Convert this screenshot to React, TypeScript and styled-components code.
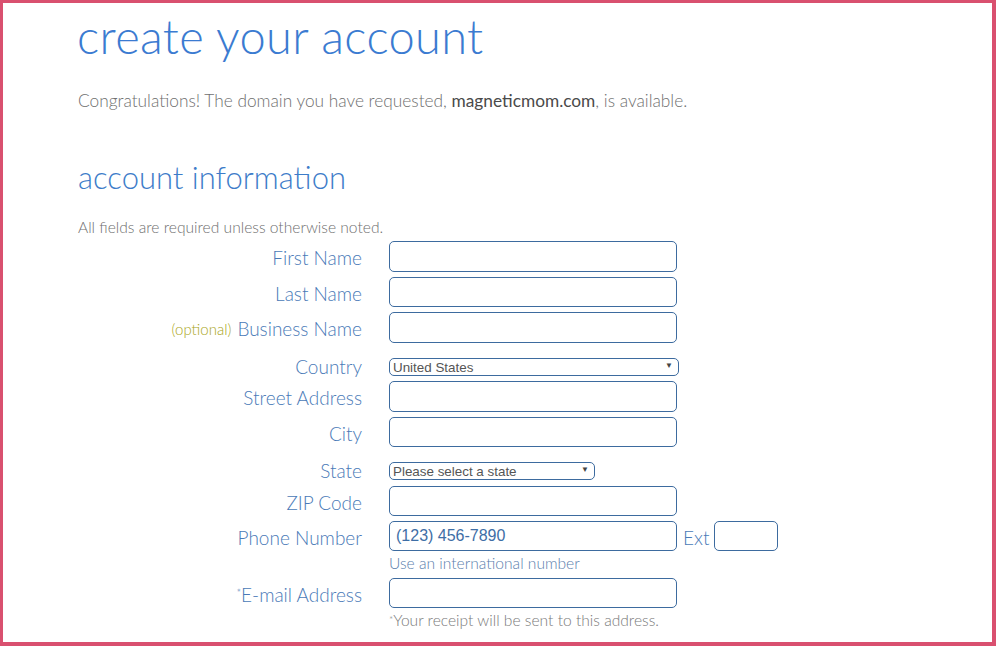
import React from "react";
import styled, { createGlobalStyle } from "styled-components";

const Global = createGlobalStyle`
  html, body { margin: 0; padding: 0; background: #fff; }
  * { box-sizing: border-box; }
`;

const Frame = styled.div`
  width: 996px;
  height: 646px;
  border: 3px solid #d9506f;
  border-right-width: 4px;
  border-bottom-width: 4px;
  overflow: hidden;
  padding: 0 0 0 75px;
  font-family: Lato, "Open Sans", sans-serif;
`;

const Title = styled.h1`
  margin: 5px 0 0 -1px;
  font-weight: 300;
  font-size: 47px;
  line-height: 56px;
  color: #3b7bd1;
  letter-spacing: 0.35px;
`;

const Intro = styled.p`
  margin: 25px 0 0;
  font-size: 17.3px;
  line-height: 24px;
  font-weight: 300;
  color: #6f6f6f;
`;

const Strong = styled.span`
  font-weight: 400;
  color: #4a4a4a;
`;

const Section = styled.h2`
  margin: 44px 0 0;
  font-weight: 300;
  font-size: 31px;
  line-height: 40px;
  color: #3d7cc9;
`;

const Note = styled.p`
  margin: 20px 0 0;
  font-size: 15.6px;
  line-height: 20px;
  font-weight: 300;
  color: #6f6f6f;
`;

const Form = styled.div`
  display: grid;
  grid-template-columns: 287px auto;
  column-gap: 27px;
  margin-top: 4px;
  margin-left: -3px;
`;

const Label = styled.label<{ $mt?: number; $h?: number }>`
  margin-top: ${(p) => p.$mt ?? 0}px;
  height: ${(p) => p.$h ?? 31}px;
  padding-top: 2px;
  display: flex;
  align-items: center;
  justify-content: flex-end;
  font-size: 19px;
  font-weight: 300;
  color: #4a7ab7;
  white-space: nowrap;
`;

const Optional = styled.span`
  color: #a9a520;
  font-size: 15px;
  margin-right: 6px;
`;

const Star = styled.span<{ $size?: number; $mt?: number }>`
  font-size: ${(p) => p.$size ?? 11}px;
  line-height: 1;
  align-self: flex-start;
  margin-top: ${(p) => p.$mt ?? 7}px;
`;

const Cell = styled.div<{ $mt?: number; $h?: number }>`
  margin-top: ${(p) => p.$mt ?? 0}px;
  height: ${(p) => p.$h ?? 31}px;
  display: flex;
  align-items: center;
`;

const Input = styled.input<{ $w?: number }>`
  width: ${(p) => p.$w ?? 288}px;
  height: 100%;
  border: 1.5px solid #3d6b9f;
  border-radius: 5px;
  background: #fff;
  padding: 0 6px;
  font-family: Arial, "Liberation Sans", sans-serif;
  font-size: 16px;
  color: #3e6ea6;
  outline: none;
  &::placeholder { color: #3e6ea6; opacity: 1; }
`;

const SelectBox = styled.div<{ $w: number }>`
  position: relative;
  width: ${(p) => p.$w}px;
  height: 18px;
  margin-top: -1px;
`;

const Select = styled.select`
  appearance: none;
  width: 100%;
  height: 100%;
  border: 1.5px solid #3d6b9f;
  border-radius: 5px;
  background: #fff;
  padding: 0 0 0 3px;
  font-family: Arial, "Liberation Sans", sans-serif;
  font-size: 13.4px;
  color: #555;
  outline: none;
`;

const Arrow = styled.span`
  position: absolute;
  right: 6px;
  top: 2px;
  font-size: 8px;
  color: #444;
  pointer-events: none;
  line-height: 14px;
`;

const Ext = styled.span`
  font-size: 19px;
  font-weight: 300;
  color: #4a7ab7;
  margin: 2px 5px 0 6px;
`;

const Help = styled.div<{ $color: string; $mt?: number }>`
  margin-top: ${(p) => p.$mt ?? 0}px;
  display: flex;
  font-size: 15.6px;
  font-weight: 300;
  line-height: 20px;
  color: ${(p) => p.$color};
`;

const Empty = styled.div``;

export default function App() {
  return (
    <>
      <Global />
      <Frame>
        <Title>create your account</Title>
        <Intro>
          Congratulations! The domain you have requested, <Strong>magneticmom.com</Strong>, is available.
        </Intro>
        <Section>account information</Section>
        <Note>All fields are required unless otherwise noted.</Note>
        <Form>
          <Label>First Name</Label>
          <Cell><Input /></Cell>

          <Label $mt={5} $h={30}>Last Name</Label>
          <Cell $mt={5} $h={30}><Input /></Cell>

          <Label $mt={5}><Optional>(optional)</Optional>Business Name</Label>
          <Cell $mt={5}><Input /></Cell>

          <Label $mt={6} $h={32}>Country</Label>
          <Cell $mt={6} $h={32}>
            <SelectBox $w={290}>
              <Select defaultValue="us">
                <option value="us">United States</option>
              </Select>
              <Arrow>▼</Arrow>
            </SelectBox>
          </Cell>

          <Label>Street Address</Label>
          <Cell><Input /></Cell>

          <Label $mt={5} $h={30}>City</Label>
          <Cell $mt={5} $h={30}><Input /></Cell>

          <Label $mt={5} $h={34}>State</Label>
          <Cell $mt={5} $h={34}>
            <SelectBox $w={206}>
              <Select defaultValue="">
                <option value="">Please select a state</option>
              </Select>
              <Arrow>▼</Arrow>
            </SelectBox>
          </Cell>

          <Label $h={30}>ZIP Code</Label>
          <Cell $h={30}><Input /></Cell>

          <Label $mt={5} $h={30}>Phone Number</Label>
          <Cell $mt={5} $h={30}>
            <Input placeholder="(123) 456-7890" />
            <Ext>Ext</Ext>
            <Input $w={64} />
          </Cell>

          <Empty />
          <Help $color="#5b80ad" $mt={2}>Use an international number</Help>

          <Label $mt={5} $h={30}><Star>*</Star>E-mail Address</Label>
          <Cell $mt={5} $h={30}><Input /></Cell>

          <Empty />
          <Help $color="#7a7a7a" $mt={2}><Star $size={10} $mt={4}>*</Star>Your receipt will be sent to this address.</Help>
        </Form>
      </Frame>
    </>
  );
}
